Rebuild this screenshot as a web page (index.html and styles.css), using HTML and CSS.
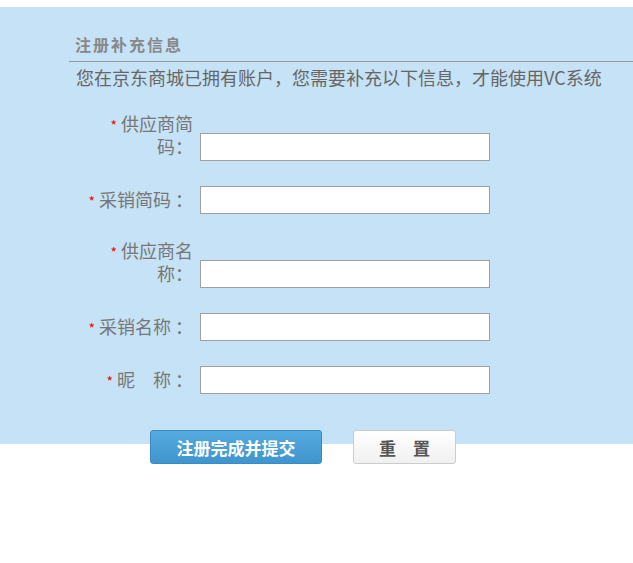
FILE: index.html
```html
<!DOCTYPE html>
<html lang="zh-CN">
<head>
    <meta charset="UTF-8">
    <title>注册补充信息</title>
    <link rel="stylesheet" href="styles.css">
</head>
<body>
    <div class="panel">
        <div class="panel-head">
            <h3 class="title">注册补充信息</h3>
            <p class="tip">您在京东商城已拥有账户，您需要补充以下信息，才能使用VC系统</p>
        </div>
        <form class="reg-form" id="regForm">
            <div class="row">
                <label class="label"><span class="req">*</span> 供应商简码：</label>
                <input type="text" class="ipt">
            </div>
            <div class="row">
                <label class="label"><span class="req">*</span> 采销简码 ：</label>
                <input type="text" class="ipt">
            </div>
            <div class="row">
                <label class="label"><span class="req">*</span> 供应商名称：</label>
                <input type="text" class="ipt">
            </div>
            <div class="row">
                <label class="label"><span class="req">*</span> 采销名称 ：</label>
                <input type="text" class="ipt">
            </div>
            <div class="row">
                <label class="label"><span class="req">*</span> 昵　称 ：</label>
                <input type="text" class="ipt">
            </div>
        </form>
    </div>
    <div class="btns">
        <button type="submit" form="regForm" class="btn-submit">注册完成并提交</button>
        <button type="reset" form="regForm" class="btn-reset">重　置</button>
    </div>
</body>
</html>
```

FILE: styles.css
```css
body {
    margin: 0;
    font-family: "Microsoft YaHei", "Noto Sans CJK SC", sans-serif;
    background: #fff;
}
.panel {
    margin-top: 7px;
    padding-bottom: 25px;
    background-color: #c6e2f6;
}
.panel-head {
    margin-left: 69px;
}
.title {
    margin: 0;
    padding: 27px 6px 6px;
    line-height: 21px;
    font-size: 16px;
    font-weight: bold;
    letter-spacing: 2px;
    color: #888;
    border-bottom: 1px solid #999;
}
.tip {
    margin: 0;
    padding: 3px 0 0 7px;
    line-height: 24px;
    font-size: 18px;
    color: #666;
}
.reg-form {
    margin-top: 23px;
}
.row {
    display: flex;
    align-items: flex-end;
    margin-bottom: 25px;
    padding-left: 81px;
}
.label {
    width: 112px;
    padding-bottom: 3px;
    text-align: right;
    font-size: 18px;
    line-height: 23px;
    color: #777;
}
.req {
    color: #f00;
    font-size: 14px;
    line-height: 1;
}
.ipt {
    box-sizing: border-box;
    width: 290px;
    height: 28px;
    margin: 0 0 0 7px;
    border: 1px solid #a0a0a0;
    background: #fff;
    outline: none;
}
.btns {
    display: flex;
    gap: 31px;
    margin-top: -14px;
    padding-left: 150px;
}
.btns button {
    box-sizing: border-box;
    height: 34px;
    border-radius: 3px;
    font-family: inherit;
    font-weight: bold;
    font-size: 17px;
    cursor: pointer;
}
.btn-submit {
    width: 172px;
    color: #fff;
    border: 1px solid #3a8bc4;
    background: linear-gradient(#55aade, #3f95cd);
}
.btn-reset {
    width: 103px;
    color: #555;
    border: 1px solid #ccc;
    background: linear-gradient(#fff, #f0f0f0);
}
```
